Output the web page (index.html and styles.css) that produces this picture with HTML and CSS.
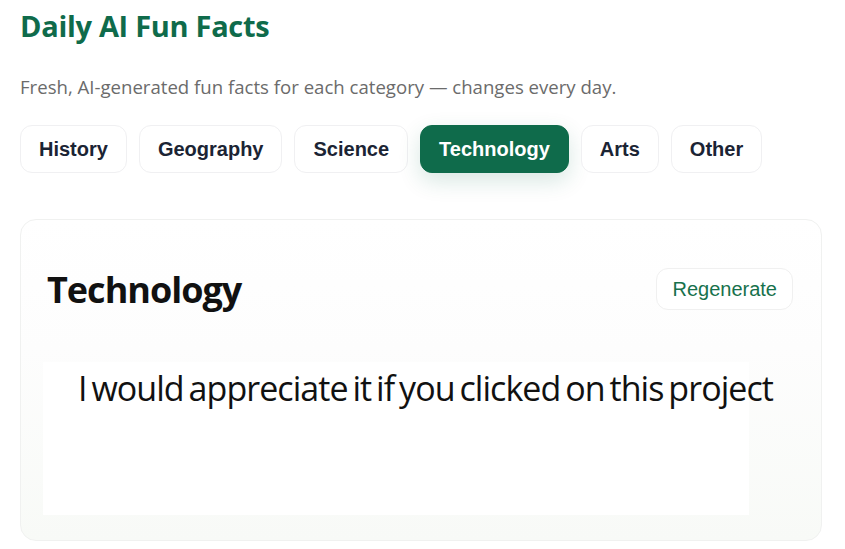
FILE: index.html
```html
<!DOCTYPE html>
<html lang="en">
<head>
<meta charset="utf-8">
<title>Daily AI Fun Facts</title>
<link rel="stylesheet" href="styles.css">
</head>
<body>
<main class="page">
  <h1 class="title">Daily AI Fun Facts</h1>
  <p class="subtitle">Fresh, AI-generated fun facts for each category — changes every day.</p>
  <nav class="tabs">
    <button class="tab">History</button>
    <button class="tab">Geography</button>
    <button class="tab">Science</button>
    <button class="tab tab-active">Technology</button>
    <button class="tab">Arts</button>
    <button class="tab">Other</button>
  </nav>
  <section class="card">
    <div class="card-head">
      <h2 class="card-title">Technology</h2>
      <button class="regen">Regenerate</button>
    </div>
    <div class="fact">
      <p class="fact-text">I would appreciate it if you clicked on this project</p>
    </div>
  </section>
</main>
</body>
</html>
```
FILE: styles.css
```css
* { box-sizing: border-box; }
html, body { margin: 0; background: #ffffff; }
body {
  font-family: "Open Sans", "Noto Sans", sans-serif;
  color: #111;
}
.page {
  padding: 6px 20px 0 20px;
  width: 845px;
}
.title {
  margin: 0;
  font-size: 29px;
  font-weight: 700;
  line-height: 40px;
  color: #0f6b4b;
  letter-spacing: -0.3px;
}
.subtitle {
  margin: 28px 0 0 0;
  font-size: 18.6px;
  line-height: 26px;
  color: #6b6b6b;
  letter-spacing: 0;
}
.tabs {
  display: flex;
  gap: 12px;
  margin-top: 25px;
}
.tab {
  height: 48px;
  padding: 0 18px;
  border: 1px solid #f0f0f2;
  border-radius: 12px;
  background: #fff;
  font-family: "Liberation Sans", Arial, sans-serif;
  font-weight: 700;
  font-size: 20px;
  color: #1b2434;
}
.tab-active {
  background: #0f6b4b;
  border-color: #0f6b4b;
  color: #fff;
  box-shadow: 0 8px 22px rgba(15, 107, 75, 0.16);
}
.card {
  margin-top: 46px;
  width: 802px;
  height: 322px;
  border: 1px solid #f0f1f0;
  border-radius: 16px;
  background: linear-gradient(180deg, #ffffff 0%, #fdfdfd 40%, #f8faf7 100%);
  padding: 48px 28px 0 28px;
}
.card-head {
  display: flex;
  justify-content: space-between;
  align-items: center;
  height: 42px;
}
.card-title {
  margin: 0 0 0 -2px;
  font-size: 36px;
  font-weight: 700;
  color: #111;
  letter-spacing: -1px;
}
.regen {
  height: 42px;
  padding: 0 15px;
  border: 1px solid #f0f0f0;
  border-radius: 12px;
  background: #fff;
  font-family: "Liberation Sans", Arial, sans-serif;
  font-size: 20px;
  color: #17714c;
}
.fact {
  margin: 52px 0 0 -6px;
  width: 706px;
  height: 153px;
  background: #fff;
  padding: 0 0 0 35px;
}
.fact-text {
  margin: 0;
  padding-top: 6px;
  white-space: nowrap;
  font-size: 34px;
  line-height: 40px;
  letter-spacing: -0.95px;
  word-spacing: -3px;
  color: #111;
}
```
